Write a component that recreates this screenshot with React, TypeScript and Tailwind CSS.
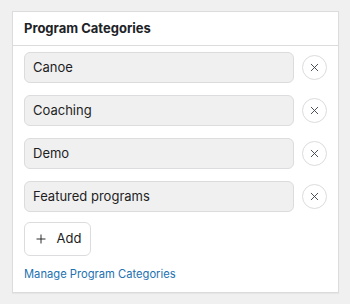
import { X, Plus } from "lucide-react";

const categories = ["Canoe", "Coaching", "Demo", "Featured programs"];

export default function App() {
  return (
    <div
      className="w-[350px] h-[304px] bg-[#f0f0f1] pt-[11px] pl-[12px]"
      style={{ fontFamily: "Inter, 'Noto Sans', sans-serif" }}
    >
      <div className="w-[327px] h-[282px] bg-white border border-[#dcdcde] shadow-[0_1px_1px_rgba(0,0,0,0.04)]">
        {/* Header */}
        <div className="h-[34px] flex items-center px-[11px] border-b border-[#dcdcde]">
          <h2 className="text-[13px] font-bold text-[#1d2327]">Program Categories</h2>
        </div>

        <div className="px-[11px] pt-[6px]">
          <ul className="flex flex-col gap-[12px]">
            {categories.map((name) => (
              <li key={name} className="flex items-center gap-[8px]">
                <div className="w-[270px] h-[31px] rounded-[6px] bg-[#f0f0f1] border border-[#dcdcde] flex items-center px-[8px] text-[13px] text-[#1e1e1e]">
                  {name}
                </div>
                <button className="w-[25px] h-[25px] rounded-full border border-[#dcdcde] bg-white flex items-center justify-center text-[#3c434a]">
                  <X className="w-[13px] h-[13px]" strokeWidth={1.7} />
                </button>
              </li>
            ))}
          </ul>

          <button className="mt-[10px] w-[67px] h-[34px] rounded-[6px] border border-[#dcdcde] bg-white flex items-center justify-center gap-[9px] text-[13px] text-[#1e1e1e]">
            <Plus className="w-[14px] h-[14px]" strokeWidth={1.6} />
            Add
          </button>

          <a href="#" className="block mt-[10px] text-[11.2px] text-[#2271b1]">
            Manage Program Categories
          </a>
        </div>
      </div>
    </div>
  );
}
